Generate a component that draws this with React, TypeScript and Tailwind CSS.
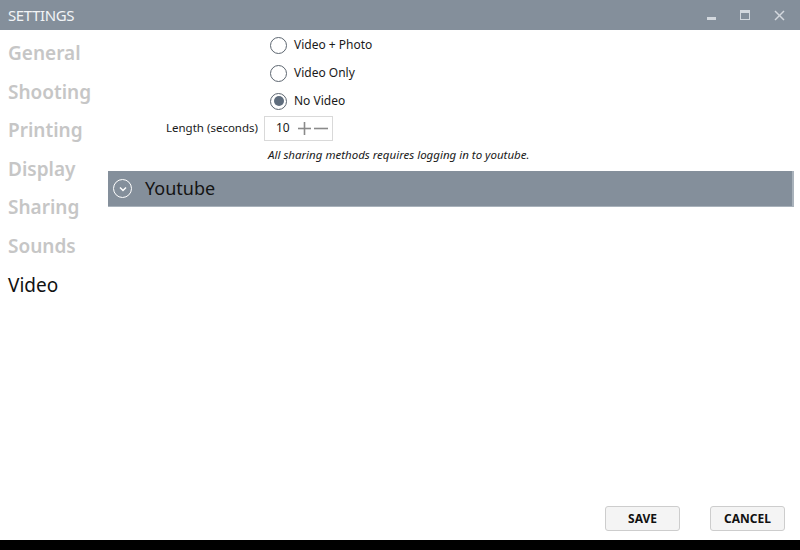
import { useState } from "react";

const NAV = ["General", "Shooting", "Printing", "Display", "Sharing", "Sounds", "Video"];
const OPTIONS = ["Video + Photo", "Video Only", "No Video"];

export default function App() {
  const [mode, setMode] = useState("No Video");
  const [length, setLength] = useState(10);

  return (
    <div className="flex flex-col w-[800px] h-[550px] bg-white overflow-hidden font-['Noto_Sans',sans-serif]">
      {/* Title bar */}
      <div className="flex items-center h-[30px] bg-[#848f9b] shrink-0">
        <span className="pl-[8px] text-[15px] text-[#f2f4f6] tracking-tight">SETTINGS</span>
        <div className="ml-auto flex items-center h-full">
          <button className="w-[34px] h-full flex items-center justify-center">
            <span className="block w-[9px] h-[3px] bg-[#d3d8de] mt-[6px]" />
          </button>
          <button className="w-[34px] h-full flex items-center justify-center">
            <span className="block w-[10px] h-[10px] border border-[#d3d8de] border-t-[3px]" />
          </button>
          <button className="w-[34px] h-full flex items-center justify-center mr-[4px]">
            <svg width="11" height="11" viewBox="0 0 11 11" stroke="#d3d8de" strokeWidth="1.5">
              <line x1="1" y1="1" x2="10" y2="10" />
              <line x1="10" y1="1" x2="1" y2="10" />
            </svg>
          </button>
        </div>
      </div>

      <div className="flex flex-1 min-h-0">
        {/* Sidebar */}
        <div className="w-[108px] shrink-0 pt-[4px] pl-[8px]">
          {NAV.map((n) => (
            <div
              key={n}
              className={`h-[38.6px] leading-[38.6px] text-[19px] ${
                n === "Video" ? "text-[#111] font-normal" : "text-[#c6c6c6] font-semibold"
              }`}
            >
              {n}
            </div>
          ))}
        </div>

        {/* Content */}
        <div className="flex-1 flex flex-col">
          <div className="grid grid-cols-[156px_1fr] text-[12px] text-[#1a1a1a] pt-[1px]">
            {OPTIONS.map((o) => (
              <div key={o} className="col-start-2 h-[28px] flex items-center pl-[6px]">
                <button onClick={() => setMode(o)} className="flex items-center gap-[7px]">
                  <span className="w-[17px] h-[17px] rounded-full border border-[#5d6670] flex items-center justify-center bg-white">
                    {mode === o && <span className="w-[10px] h-[10px] rounded-full bg-[#5f6d7d]" />}
                  </span>
                  <span>{o}</span>
                </button>
              </div>
            ))}

            <div className="h-[26px] flex items-center justify-end pr-[6px] text-[11.5px]">Length (seconds)</div>
            <div className="h-[26px] flex items-center">
              <div className="w-[69px] h-[25px] border border-[#d9d9d9] flex items-center pl-[11px]">
                <span className="w-[22px]">{length}</span>
                <button onClick={() => setLength(length + 1)} className="text-[#888]">
                  <svg width="13" height="13" viewBox="0 0 13 13" stroke="#8a8a8a" strokeWidth="1.6">
                    <line x1="6.5" y1="0" x2="6.5" y2="13" />
                    <line x1="0" y1="6.5" x2="13" y2="6.5" />
                  </svg>
                </button>
                <button onClick={() => setLength(Math.max(1, length - 1))} className="ml-[3px]">
                  <svg width="14" height="13" viewBox="0 0 14 13" stroke="#8a8a8a" strokeWidth="1.6">
                    <line x1="0" y1="6.5" x2="14" y2="6.5" />
                  </svg>
                </button>
              </div>
            </div>

            <div className="col-start-2 h-[27px] flex items-center pl-[4px] italic text-[11.5px]">
              All sharing methods requires logging in to youtube.
            </div>
          </div>

          {/* Youtube section */}
          <div className="mt-[3px] mr-[6px] h-[36px] bg-[#848f9b] border-r-2 border-b border-[#a9b2bb] flex items-center">
            <span className="ml-[5px] w-[19px] h-[19px] rounded-full border-[1.5px] border-white flex items-center justify-center">
              <svg width="8" height="6" viewBox="0 0 8 6" fill="none" stroke="white" strokeWidth="1.5">
                <polyline points="1,1.5 4,4.5 7,1.5" />
              </svg>
            </span>
            <span className="ml-[13px] text-[18px] text-[#141414]">Youtube</span>
          </div>
        </div>
      </div>

      {/* Footer */}
      <div className="h-[40px] shrink-0 flex items-start justify-end gap-[30px] pr-[15px] pt-[6px]">
        <button className="w-[75px] h-[25px] rounded-[3px] border border-[#cdcdcd] bg-[#f4f4f4] text-[12px] font-bold text-[#111]">
          SAVE
        </button>
        <button className="w-[75px] h-[25px] rounded-[3px] border border-[#cdcdcd] bg-[#f4f4f4] text-[12px] font-bold text-[#111]">
          CANCEL
        </button>
      </div>
      <div className="h-[10px] bg-black shrink-0" />
    </div>
  );
}
